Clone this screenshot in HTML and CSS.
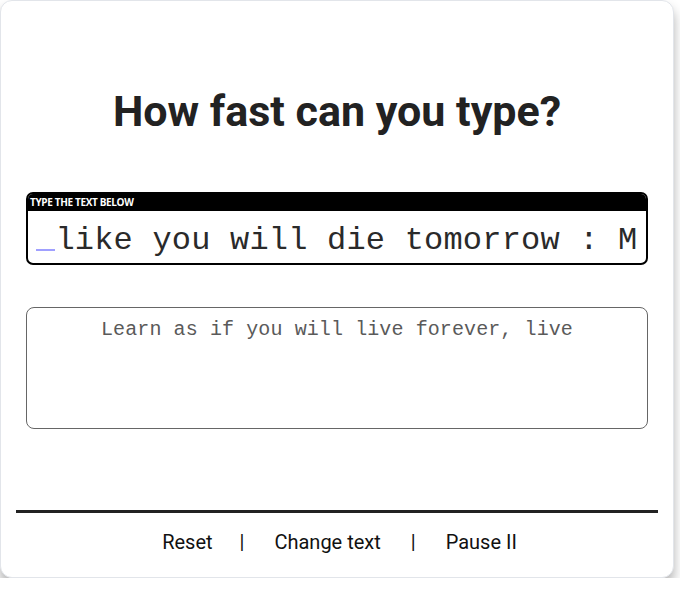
FILE: index.html
```html
<!DOCTYPE html>
<html>
<head>
<meta charset="utf-8">
<link rel="stylesheet" href="styles.css">
</head>
<body>
<div class="card">
  <h1 class="title">How fast can you type?</h1>
  <div class="content">
    <div class="target">
      <div class="target-label">TYPE THE TEXT BELOW</div>
      <div class="target-text"><span class="cursor">&nbsp;</span>like you will die tomorrow : M</div>
    </div>
    <div class="typed">Learn as if you will live forever, live</div>
  </div>
  <div class="footer">
    <span class="link reset">Reset</span>
    <span class="sep">|</span>
    <span class="link">Change text</span>
    <span class="sep">|</span>
    <span class="link">Pause II</span>
  </div>
</div>
</body>
</html>
```
FILE: styles.css
```css
html, body {
  margin: 0;
  padding: 0;
  background: #ffffff;
}
body {
  font-family: Roboto, "Liberation Sans", sans-serif;
  color: #222;
}
.card {
  box-sizing: border-box;
  width: 674px;
  height: 578px;
  margin: 0;
  border: 1px solid #e2e5ea;
  border-radius: 12px;
  box-shadow: 0 8px 12px rgba(0, 0, 0, 0.3);
  background: #fff;
  display: flex;
  flex-direction: column;
  padding: 0 15px 0 15px;
}
.title {
  margin: 85px 0 0 0;
  text-align: center;
  font-size: 43px;
  font-weight: 700;
  line-height: 50px;
  color: #222;
}
.content {
  padding: 0 10px;
  display: flex;
  flex-direction: column;
}
.target {
  margin-top: 56px;
  border: 2px solid #000;
  border-radius: 7px;
  overflow: hidden;
  height: 73px;
  box-sizing: border-box;
}
.target-label {
  background: #000;
  color: #fff;
  font-family: "Open Sans", sans-serif;
  font-weight: 700;
  font-size: 10px;
  letter-spacing: -0.35px;
  line-height: 17px;
  height: 17px;
  padding-left: 2px;
}
.target-text {
  font-family: "Liberation Mono", "Courier New", monospace;
  font-size: 32px;
  letter-spacing: 0.2px;
  line-height: 52px;
  padding-top: 4px;
  color: #2a2a2a;
  white-space: nowrap;
  overflow: hidden;
  margin: 0 8px;
}
.cursor {
  color: #a0a0ff;
  border-bottom: 2px solid #a0a0ff;
  display: inline-block;
  width: 19.4px;
  height: 34px;
  vertical-align: baseline;
}
.typed {
  margin-top: 42px;
  box-sizing: border-box;
  height: 122px;
  border: 1px solid #666;
  border-radius: 8px;
  font-family: "Liberation Mono", "Courier New", monospace;
  font-size: 20px;
  letter-spacing: 0.1px;
  color: #5a5a5a;
  text-align: center;
  padding-top: 10px;
  line-height: 24px;
}
.footer {
  margin-top: auto;
  margin-bottom: 23px;
  border-top: 3px solid #222;
  padding: 17px 0 0 5px;
  display: flex;
  justify-content: center;
  gap: 29px;
  font-size: 20px;
  line-height: 24px;
  color: #111;
}
.reset {
  margin-right: -3px;
}
.sep {
  margin: 0 1px;
}
```
